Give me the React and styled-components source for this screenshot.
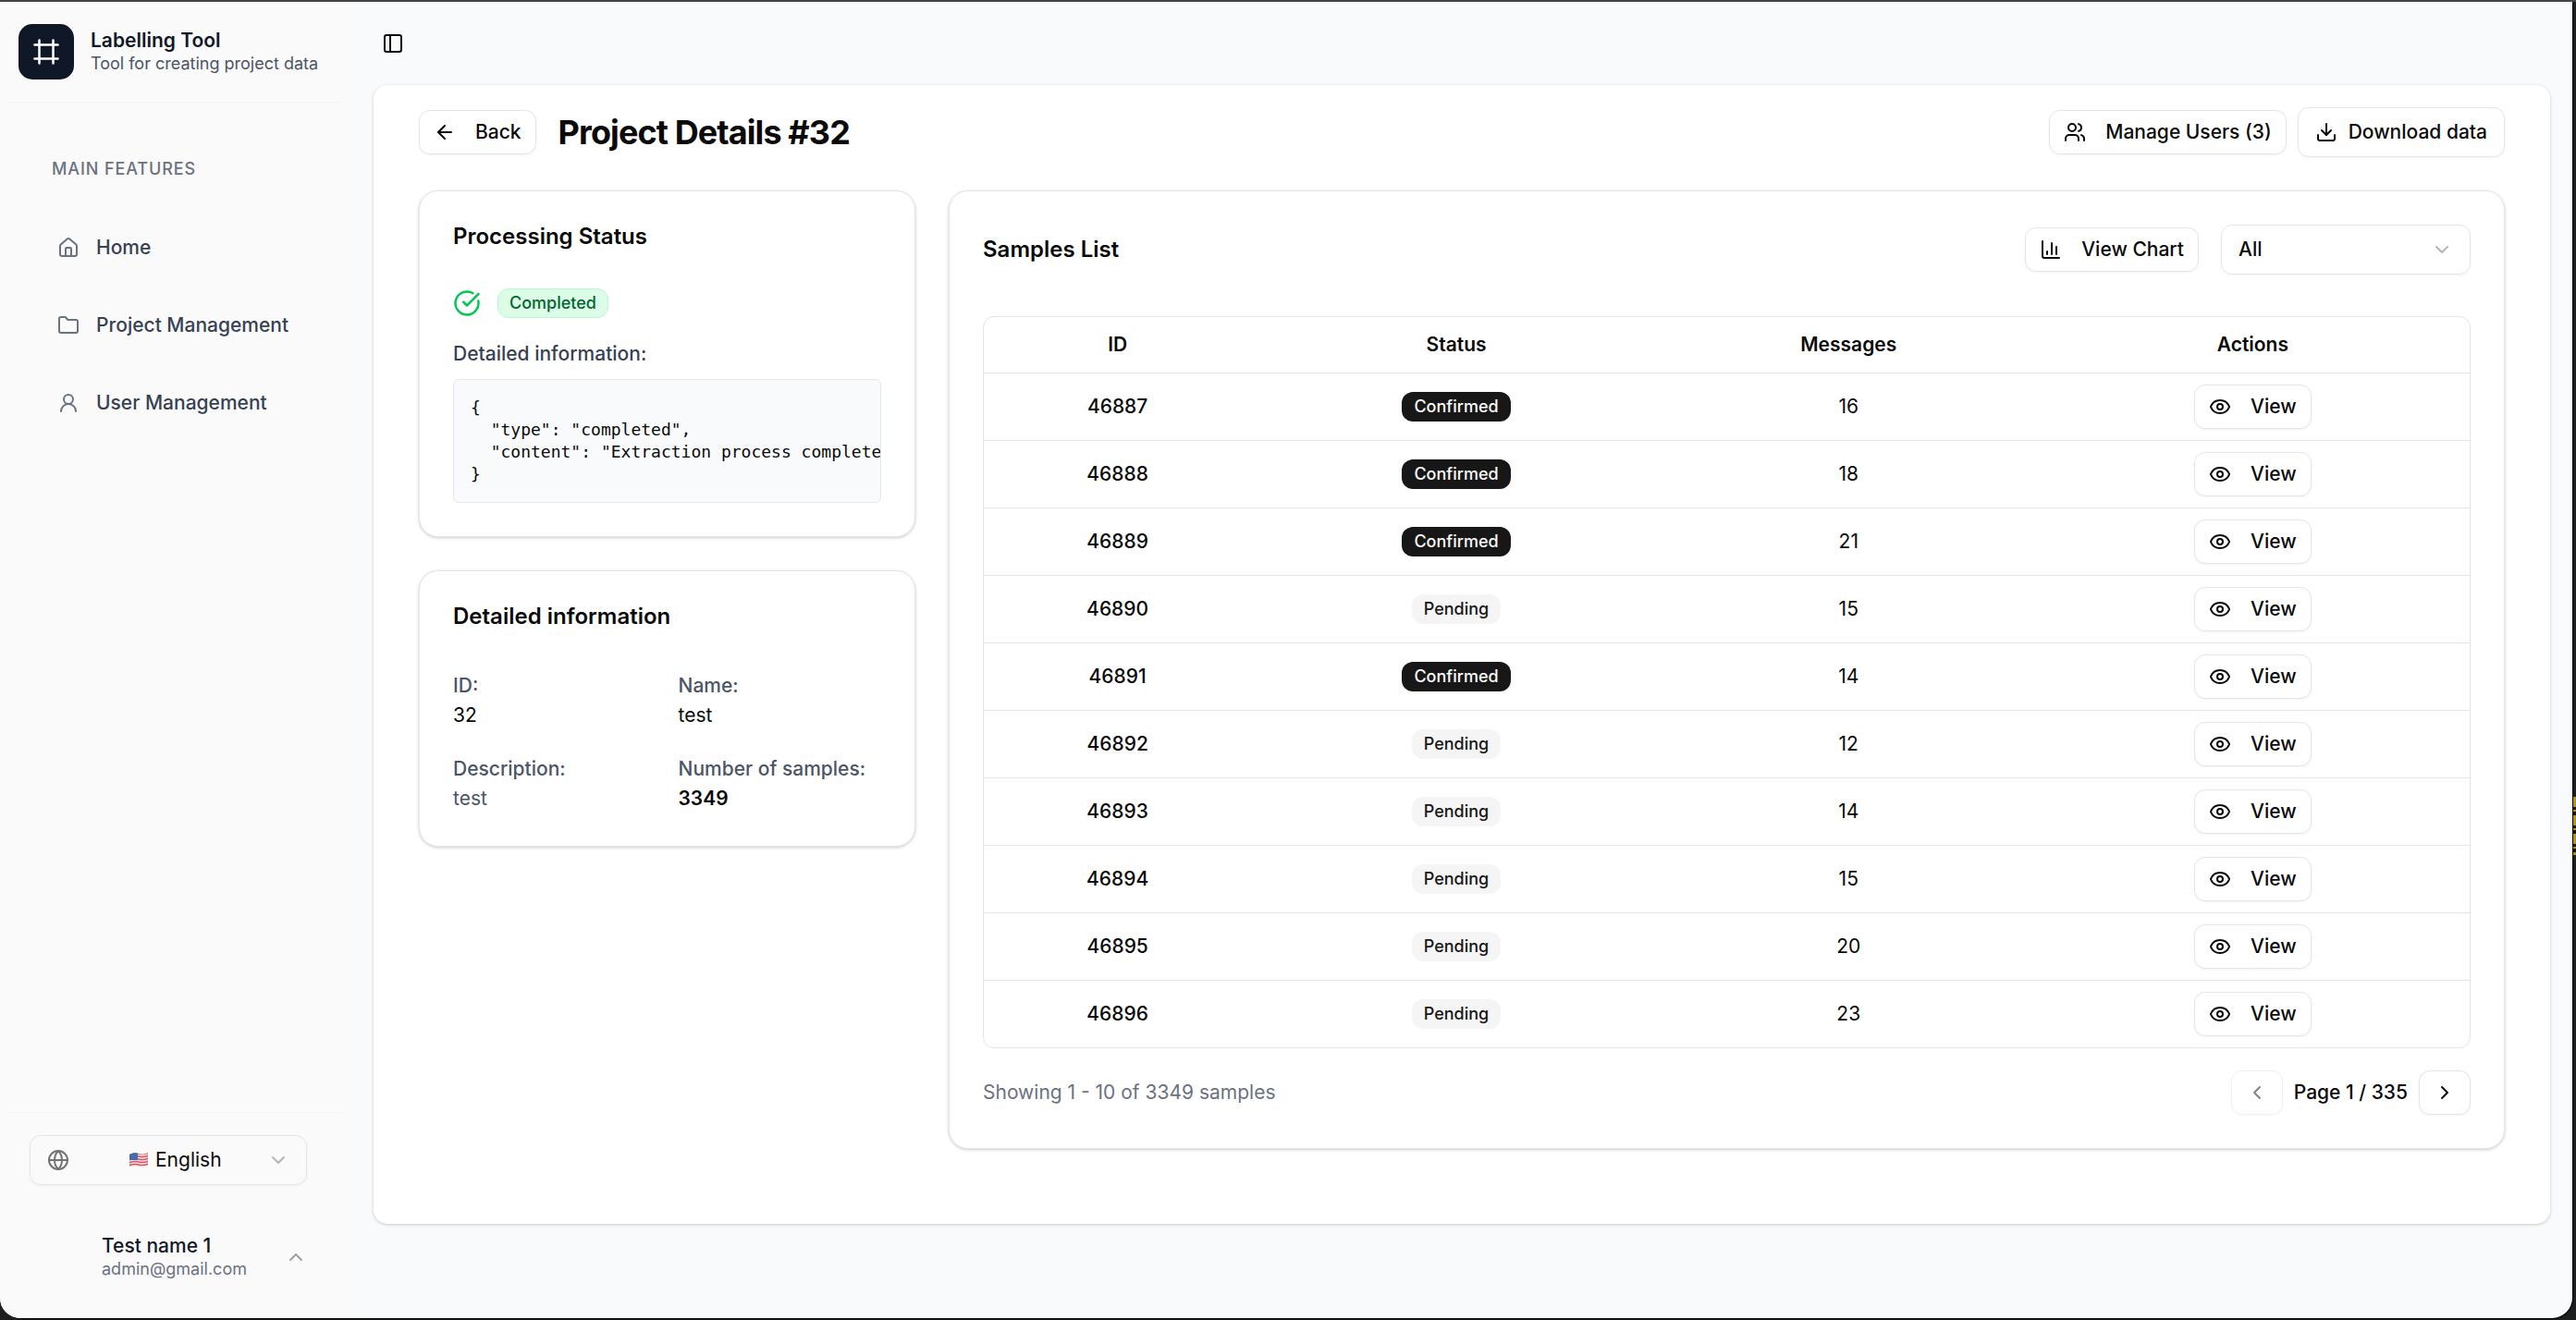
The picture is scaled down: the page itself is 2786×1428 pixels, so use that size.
import React from "react";
import styled, { createGlobalStyle } from "styled-components";
import {
  ArrowLeft,
  ChartColumn,
  ChevronDown,
  ChevronLeft,
  ChevronRight,
  ChevronUp,
  CircleCheckBig,
  Download,
  Eye,
  Folder,
  Frame,
  Globe,
  House,
  PanelLeft,
  UserRound,
  Users,
} from "lucide-react";

const GlobalStyle = createGlobalStyle`
  *, *::before, *::after { box-sizing: border-box; }
  body {
    margin: 0;
    background: #1e1f1f;
    color: #0a0a0a;
    font-family: Inter, "Liberation Sans", sans-serif;
    font-size: 21px;
    line-height: 30px;
  }
  h1, h2, h3, p, pre, dl, dd, ul { margin: 0; padding: 0; }
  button, select { font: inherit; color: inherit; }
  svg { flex: none; display: block; }
`;

const Desktop = styled.div`
  min-height: 100vh;
  display: flex;
  padding: 0 4px 2px 0;
  border-top: 2px solid #444444;
  background:
    repeating-linear-gradient(180deg, #b3950f 0 11px, #16160c 11px 14px, #b3950f 14px 16px, #16160c 16px 20px)
    right 860px / 3px 63px no-repeat,
    #1e1f1f;
`;

const Window = styled.div`
  flex: 1;
  min-width: 0;
  display: flex;
  overflow: hidden;
  border-radius: 0 0 22px 22px;
  background: #f9fafc;
  box-shadow: 1px 1px 0 #000000;
`;

const Sidebar = styled.aside`
  width: 384px;
  flex: none;
  display: flex;
  flex-direction: column;
  padding: 0 16px 0 8px;
  background: #fafafa;
`;

const Brand = styled.header`
  display: flex;
  align-items: center;
  gap: 18px;
  padding: 24px 12px;
  border-bottom: 1px solid #f3f4f6;
`;

const Logo = styled.span`
  display: grid;
  place-items: center;
  width: 60px;
  height: 60px;
  border-radius: 15px;
  background: #101828;
  color: #ffffff;
`;

const TwoLines = styled.span`
  display: flex;
  flex-direction: column;
  text-align: left;
`;

const StrongLine = styled.span`
  font-weight: ${(p) => p.$weight};
  line-height: 26px;
  color: #101828;
`;

const SmallLine = styled.span`
  font-size: 18px;
  line-height: 24px;
  color: ${(p) => p.$color};
`;

const Nav = styled.nav`
  flex: 1;
  padding: 60px 36px;
`;

const NavHeading = styled.h3`
  padding: 0 12px;
  margin-bottom: 43px;
  font-size: 18px;
  line-height: 24px;
  font-weight: 500;
  letter-spacing: 0.05em;
  text-transform: uppercase;
  color: #6a7282;
`;

const NavList = styled.ul`
  display: flex;
  flex-direction: column;
  gap: 24px;
  list-style: none;
`;

const NavLink = styled.a`
  display: flex;
  align-items: center;
  gap: 18px;
  height: 60px;
  padding: 0 18px;
  font-weight: 500;
  color: #364153;
  text-decoration: none;
  white-space: nowrap;
  svg { color: #6a7282; }
`;

const SideFooter = styled.footer`
  padding: 24px 36px 30px 24px;
  border-top: 1px solid #f3f4f6;
`;

const SelectBox = styled.label`
  display: grid;
  align-items: center;
  width: ${(p) => p.$width};
  > * { grid-area: 1 / 1; }
  > svg { pointer-events: none; }
`;

const Select = styled.select`
  appearance: none;
  width: 100%;
  height: 54px;
  padding: 0 54px 0 ${(p) => p.$indent};
  border: 1px solid #e5e5e5;
  border-radius: 12px;
  background: transparent;
  box-shadow: 0 1px 3px rgba(0, 0, 0, 0.05);
  font-weight: ${(p) => p.$weight};
`;

const SelectChevron = styled(ChevronDown)`
  justify-self: end;
  margin-right: 19px;
  color: #b5b5b5;
`;

const LangGlobe = styled(Globe)`
  margin-left: 19px;
  color: #737373;
`;

const FlagIcon = styled.svg`
  margin-left: 107px;
`;

const UserButton = styled.button`
  display: flex;
  align-items: center;
  gap: 12px;
  width: 100%;
  height: 72px;
  margin-top: 42px;
  padding: 0 0 0 18px;
  border: 0;
  background: none;
  svg { margin-left: auto; color: #99a1af; }
`;

const Avatar = styled.span`
  width: 48px;
  height: 48px;
  border-radius: 50%;
`;

const Main = styled.main`
  flex: 1;
  min-width: 0;
  display: flex;
  flex-direction: column;
  align-items: stretch;
  gap: 24px;
  padding: 24px 24px 48px 20px;
`;

const ToggleButton = styled.button`
  display: grid;
  place-items: center;
  width: 42px;
  height: 42px;
  padding: 0;
  border: 0;
  background: none;
`;

const Panel = styled.section`
  padding: 24px 49px 81px;
  border-radius: 15px;
  background: #ffffff;
  box-shadow: 0 1px 4px rgba(0, 0, 0, 0.1), 0 1px 3px rgba(0, 0, 0, 0.1);
`;

const Row = styled.div`
  display: flex;
  align-items: center;
  justify-content: ${(p) => (p.$spread ? "space-between" : "flex-start")};
  gap: ${(p) => p.$gap};
`;

const PageTitle = styled.h1`
  font-size: 36px;
  line-height: 48px;
  font-weight: 700;
  letter-spacing: -0.025em;
`;

const Button = styled.button`
  display: inline-flex;
  align-items: center;
  justify-content: center;
  gap: ${(p) => (p.$large ? "12px" : "21px")};
  height: ${(p) => (p.$large ? "54px" : "48px")};
  padding: 0 ${(p) => (p.$large ? "18px" : "15px")};
  border: 1px solid #e5e5e5;
  border-radius: 12px;
  background: #ffffff;
  box-shadow: 0 1px 3px rgba(0, 0, 0, 0.05);
  font-weight: 500;
  white-space: nowrap;
  &:disabled { opacity: 0.5; }
`;

const Columns = styled.div`
  display: grid;
  grid-template-columns: repeat(4, minmax(0, 1fr));
  align-items: start;
  gap: 36px;
  margin-top: 36px;
`;

const LeftColumn = styled.div`
  display: grid;
  gap: 36px;
`;

const Card = styled.section`
  min-width: 0;
  grid-column: span ${(p) => p.$span || 1};
  padding: 36px;
  border: 1px solid #e5e5e5;
  border-radius: 21px;
  background: #ffffff;
  box-shadow: 0 1px 4px rgba(0, 0, 0, 0.1), 0 1px 3px rgba(0, 0, 0, 0.1);
`;

const CardHead = styled.div`
  display: flex;
  align-items: center;
  justify-content: space-between;
  margin-bottom: ${(p) => (p.$tall ? "45px" : "43px")};
`;

const CardTitle = styled.h2`
  font-size: 24px;
  line-height: 26px;
  font-weight: 600;
`;

const badgeColors = {
  done: "background: #dcfce7; border-color: #b9f8cf; color: #016630;",
  confirmed: "background: #171717; color: #fafafa;",
  pending: "background: #f5f5f5; color: #171717;",
};

const Badge = styled.span`
  display: inline-block;
  vertical-align: middle;
  padding: 3px 12px;
  border: 1px solid transparent;
  border-radius: 12px;
  font-size: 18px;
  line-height: 24px;
  font-weight: 500;
  ${(p) => badgeColors[p.$kind]}
`;

const DetailLabel = styled.p`
  margin: 24px 0 12px;
  font-weight: 500;
  color: #364153;
`;

const Code = styled.pre`
  overflow: hidden;
  padding: 18px;
  border: 1px solid #e5e7eb;
  border-radius: 6px;
  background: #f9fafb;
  font-family: "DejaVu Sans Mono", monospace;
  font-size: 18px;
  line-height: 24px;
`;

const Facts = styled.dl`
  display: grid;
  grid-template-columns: 1fr 1fr;
  gap: 24px;
`;

const Term = styled.dt`
  font-size: 24px;
  line-height: 36px;
  span {
    font-size: 21px;
    line-height: 30px;
    font-weight: 500;
    color: #4a5565;
  }
`;

const Value = styled.dd`
  font-weight: ${(p) => (p.$bold ? 600 : 400)};
  color: ${(p) => (p.$muted ? "#4a5565" : "#0a0a0a")};
`;

const TableFrame = styled.div`
  overflow: hidden;
  border: 1px solid #e5e5e5;
  border-radius: 12px;
`;

const Table = styled.table`
  width: 100%;
  table-layout: fixed;
  border-collapse: separate;
  border-spacing: 0;
  text-align: center;
`;

const HeadCell = styled.th`
  width: ${(p) => p.$width};
  height: 61px;
  padding: 0;
  border-bottom: 1px solid #e5e5e5;
  font-weight: 600;
`;

const BodyRow = styled.tr`
  td { border-bottom: 1px solid #e5e5e5; }
  &:last-child td { height: 72px; border-bottom: 0; }
`;

const Cell = styled.td`
  height: 73px;
  padding: 0;
  font-weight: ${(p) => (p.$strong ? 500 : 400)};
  ${Button} { vertical-align: middle; }
`;

const TableFooter = styled(Row)`
  margin-top: 24px;
`;

const Muted = styled.p`
  color: #6a7282;
`;

const PageLabel = styled.span`
  font-weight: 500;
`;

const navItems = [
  { label: "Home", Icon: House },
  { label: "Project Management", Icon: Folder },
  { label: "User Management", Icon: UserRound },
];

const columns = [
  ["ID", "18%"],
  ["Status", "27.6%"],
  ["Messages", "25.2%"],
  ["Actions", "29.2%"],
];

const samples = [
  [46887, "Confirmed", 16],
  [46888, "Confirmed", 18],
  [46889, "Confirmed", 21],
  [46890, "Pending", 15],
  [46891, "Confirmed", 14],
  [46892, "Pending", 12],
  [46893, "Pending", 14],
  [46894, "Pending", 15],
  [46895, "Pending", 20],
  [46896, "Pending", 23],
];

const statusJson = `{
  "type": "completed",
  "content": "Extraction process completed"
}`;

function Flag() {
  return (
    <FlagIcon width="22" height="18" viewBox="0 0 22 18" aria-hidden="true">
      <clipPath id="wave">
        <path d="M1 3C5 1 8 1 11 2S17 3 21 1V15C17 17 14 17 11 16S5 15 1 17Z" />
      </clipPath>
      <g clipPath="url(#wave)">
        <rect width="22" height="18" fill="#f3e4e6" />
        {[2, 5, 8, 11, 14].map((y) => (
          <path
            key={y}
            d={`M0 ${y + 1}C5 ${y - 1} 8 ${y - 1} 11 ${y}S17 ${y + 1} 22 ${y - 1}`}
            stroke="#dd5563"
            strokeWidth="1.5"
            fill="none"
          />
        ))}
        <path d="M0 0H10V9H0Z" fill="#3f6fae" />
      </g>
    </FlagIcon>
  );
}

function SideBar() {
  return (
    <Sidebar>
      <Brand>
        <Logo>
          <Frame size={30} strokeWidth={2} />
        </Logo>
        <TwoLines>
          <StrongLine $weight={600}>Labelling Tool</StrongLine>
          <SmallLine $color="#4a5565">Tool for creating project data</SmallLine>
        </TwoLines>
      </Brand>
      <Nav>
        <NavHeading>Main Features</NavHeading>
        <NavList>
          {navItems.map(({ label, Icon }) => (
            <li key={label}>
              <NavLink href="#">
                <Icon size={24} strokeWidth={2} />
                {label}
              </NavLink>
            </li>
          ))}
        </NavList>
      </Nav>
      <SideFooter>
        <SelectBox $width="100%">
          <Select $indent="135px" $weight={400} aria-label="Language">
            <option>English</option>
          </Select>
          <LangGlobe size={24} strokeWidth={2} />
          <Flag />
          <SelectChevron size={24} strokeWidth={2} />
        </SelectBox>
        <UserButton>
          <Avatar />
          <TwoLines>
            <StrongLine $weight={500}>Test name 1</StrongLine>
            <SmallLine $color="#6a7282">admin@gmail.com</SmallLine>
          </TwoLines>
          <ChevronUp size={24} strokeWidth={2} />
        </UserButton>
      </SideFooter>
    </Sidebar>
  );
}

function SamplesCard() {
  return (
    <Card $span={3}>
      <CardHead $tall>
        <CardTitle>Samples List</CardTitle>
        <Row $gap="24px">
          <Button>
            <ChartColumn size={24} />
            View Chart
          </Button>
          <SelectBox $width="270px">
            <Select $indent="18px" $weight={500} aria-label="Status filter">
              <option>All</option>
            </Select>
            <SelectChevron size={24} strokeWidth={2} />
          </SelectBox>
        </Row>
      </CardHead>
      <TableFrame>
        <Table>
          <thead>
            <tr>
              {columns.map(([name, width]) => (
                <HeadCell key={name} $width={width}>
                  {name}
                </HeadCell>
              ))}
            </tr>
          </thead>
          <tbody>
            {samples.map(([id, status, messages]) => (
              <BodyRow key={id}>
                <Cell $strong>{id}</Cell>
                <Cell>
                  <Badge $kind={status.toLowerCase()}>{status}</Badge>
                </Cell>
                <Cell>{messages}</Cell>
                <Cell>
                  <Button>
                    <Eye size={24} />
                    View
                  </Button>
                </Cell>
              </BodyRow>
            ))}
          </tbody>
        </Table>
      </TableFrame>
      <TableFooter $spread $gap="24px">
        <Muted>Showing 1 - 10 of 3349 samples</Muted>
        <Row $gap="12px">
          <Button disabled aria-label="Previous page">
            <ChevronLeft size={24} />
          </Button>
          <PageLabel>Page 1 / 335</PageLabel>
          <Button aria-label="Next page">
            <ChevronRight size={24} />
          </Button>
        </Row>
      </TableFooter>
    </Card>
  );
}

export default function App() {
  return (
    <>
      <GlobalStyle />
      <Desktop>
        <Window>
          <SideBar />
          <Main>
            <ToggleButton aria-label="Toggle sidebar">
              <PanelLeft size={24} />
            </ToggleButton>
            <Panel>
              <Row $spread $gap="24px">
                <Row $gap="24px">
                  <Button>
                    <ArrowLeft size={24} />
                    Back
                  </Button>
                  <PageTitle>Project Details #32</PageTitle>
                </Row>
                <Row $gap="12px">
                  <Button>
                    <Users size={24} />
                    Manage Users (3)
                  </Button>
                  <Button $large>
                    <Download size={24} />
                    Download data
                  </Button>
                </Row>
              </Row>
              <Columns>
                <LeftColumn>
                  <Card>
                    <CardHead>
                      <CardTitle>Processing Status</CardTitle>
                    </CardHead>
                    <Row $gap="18px">
                      <CircleCheckBig size={30} color="#00c950" />
                      <Badge $kind="done">Completed</Badge>
                    </Row>
                    <DetailLabel>Detailed information:</DetailLabel>
                    <Code>{statusJson}</Code>
                  </Card>
                  <Card>
                    <CardHead>
                      <CardTitle>Detailed information</CardTitle>
                    </CardHead>
                    <Facts>
                      <div>
                        <Term><span>ID:</span></Term>
                        <Value>32</Value>
                      </div>
                      <div>
                        <Term><span>Name:</span></Term>
                        <Value>test</Value>
                      </div>
                      <div>
                        <Term><span>Description:</span></Term>
                        <Value $muted>test</Value>
                      </div>
                      <div>
                        <Term><span>Number of samples:</span></Term>
                        <Value $bold>3349</Value>
                      </div>
                    </Facts>
                  </Card>
                </LeftColumn>
                <SamplesCard />
              </Columns>
            </Panel>
          </Main>
        </Window>
      </Desktop>
    </>
  );
}
